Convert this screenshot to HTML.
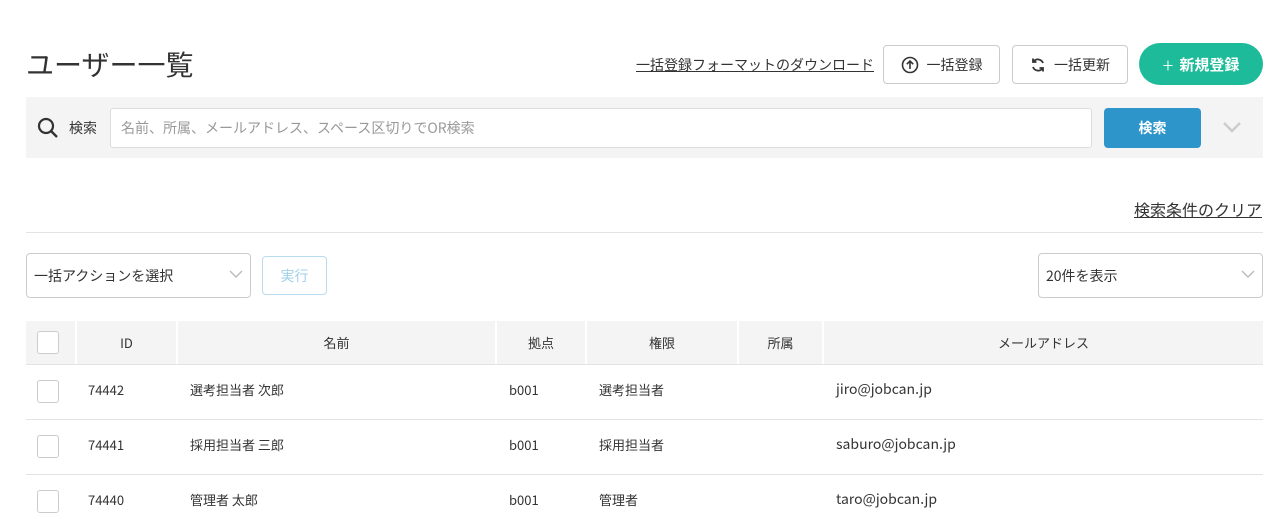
<!DOCTYPE html>
<html><head><meta charset="utf-8"><style>
*{box-sizing:border-box;margin:0;padding:0}
body{width:1288px;height:526px;overflow:hidden;background:#fff;font-family:"Noto Sans CJK JP","Liberation Sans",sans-serif;color:#333;position:relative}
.a{position:absolute}
h1{position:absolute;left:26px;top:44px;font-size:28px;line-height:40px;font-weight:400;color:#333}
.btn{position:absolute;border:1px solid #ccc;border-radius:4px;background:#fff;font-size:14px;display:flex;align-items:center;justify-content:center;gap:8px;color:#333}
.cb{position:absolute;width:22px;height:23px;border:1px solid #ccc;border-radius:3px;background:#fff}
.th{position:absolute;top:321px;height:43px;background:#f4f4f4;font-size:13px;display:flex;align-items:center;justify-content:center;border-right:2px solid #fff}
.td{position:absolute;font-size:13px;line-height:20px;color:#333}
.line{position:absolute;left:26px;width:1237px;height:1px;background:#e3e3e3}
</style></head><body>
<h1>ユーザー一覧</h1>
<div class="a" style="left:636px;top:55px;font-size:14px;line-height:20px;text-decoration:underline">一括登録フォーマットのダウンロード</div>
<div class="btn" style="left:883px;top:45px;width:117px;height:39px"><svg width="18" height="18" viewBox="0 0 18 18"><circle cx="9" cy="9" r="7.5" fill="none" stroke="#333" stroke-width="1.6"/><path d="M9 13V5M5.8 8.2L9 5l3.2 3.2" fill="none" stroke="#333" stroke-width="1.6"/></svg>一括登録</div>
<div class="btn" style="left:1012px;top:45px;width:116px;height:39px"><svg width="16" height="16" viewBox="0 0 16 16"><path d="M13 6A5.5 5.5 0 0 0 3.5 4.5M3 10a5.5 5.5 0 0 0 9.5 1.5" fill="none" stroke="#333" stroke-width="1.8"/><path d="M3 1.5v3.5h3.5M13 14.5V11H9.5" fill="none" stroke="#333" stroke-width="1.8"/></svg>一括更新</div>
<div class="btn" style="left:1139px;top:43px;width:124px;height:42px;background:#1dbb99;border:none;border-radius:21px;color:#fff;font-size:15px;font-weight:bold;gap:6px"><span style="font-size:20px;font-weight:300">+</span>新規登録</div>
<div class="a" style="left:26px;top:97px;width:1237px;height:61px;background:#f4f4f4"></div>
<svg class="a" style="left:37px;top:117px" width="22" height="22" viewBox="0 0 22 22"><circle cx="9" cy="9" r="7" fill="none" stroke="#333" stroke-width="2.2"/><path d="M14 14l6 6" stroke="#333" stroke-width="2.4"/></svg>
<div class="a" style="left:69px;top:118px;font-size:14px;line-height:20px">検索</div>
<div class="a" style="left:110px;top:108px;width:982px;height:40px;background:#fff;border:1px solid #ddd;border-radius:3px;font-size:14px;line-height:20px;color:#999;padding:9px 10px">名前、所属、メールアドレス、スペース区切りでOR検索</div>
<div class="btn" style="left:1104px;top:108px;width:97px;height:40px;background:#2e95cb;border:none;color:#fff;font-weight:bold">検索</div>
<svg class="a" style="left:1222px;top:120px" width="20" height="14" viewBox="0 0 20 14"><path d="M2 3l8 8 8-8" fill="none" stroke="#ccc" stroke-width="2.5"/></svg>
<div class="a" style="left:1134px;top:198px;font-size:16px;line-height:22px;text-decoration:underline">検索条件のクリア</div>
<div class="line" style="top:232px"></div>
<div class="btn" style="left:26px;top:253px;width:225px;height:45px;justify-content:flex-start;padding-left:7px">一括アクションを選択</div>
<svg class="a" style="left:229px;top:270px" width="14" height="9" viewBox="0 0 14 9"><path d="M1 1l6 6 6-6" fill="none" stroke="#bbb" stroke-width="1.4"/></svg>
<div class="btn" style="left:262px;top:256px;width:65px;height:39px;border-color:#b8dcef;color:#9fd0ec">実行</div>
<div class="btn" style="left:1038px;top:253px;width:225px;height:45px;justify-content:flex-start;padding-left:7px">20件を表示</div>
<svg class="a" style="left:1241px;top:270px" width="14" height="9" viewBox="0 0 14 9"><path d="M1 1l6 6 6-6" fill="none" stroke="#bbb" stroke-width="1.4"/></svg>
<div class="th" style="left:26px;width:51px"></div>
<div class="th" style="left:77px;width:101px">ID</div>
<div class="th" style="left:178px;width:319px">名前</div>
<div class="th" style="left:497px;width:90px">拠点</div>
<div class="th" style="left:587px;width:152px">権限</div>
<div class="th" style="left:739px;width:85px">所属</div>
<div class="th" style="left:824px;width:439px;border-right:none">メールアドレス</div>
<div class="line" style="top:364px"></div>
<div class="cb" style="left:37px;top:331px"></div>
<div class="cb" style="left:37px;top:380px"></div>
<div class="td" style="left:88px;top:380px">74442</div><div class="td" style="left:190px;top:380px">選考担当者 次郎</div><div class="td" style="left:509px;top:380px">b001</div><div class="td" style="left:599px;top:380px">選考担当者</div><div class="td" style="left:836px;top:379px;font-size:14px">jiro@jobcan.jp</div>
<div class="line" style="top:419px"></div>
<div class="cb" style="left:37px;top:435px"></div>
<div class="td" style="left:88px;top:435px">74441</div><div class="td" style="left:190px;top:435px">採用担当者 三郎</div><div class="td" style="left:509px;top:435px">b001</div><div class="td" style="left:599px;top:435px">採用担当者</div><div class="td" style="left:836px;top:434px;font-size:14px">saburo@jobcan.jp</div>
<div class="line" style="top:474px"></div>
<div class="cb" style="left:37px;top:490px"></div>
<div class="td" style="left:88px;top:490px">74440</div><div class="td" style="left:190px;top:490px">管理者 太郎</div><div class="td" style="left:509px;top:490px">b001</div><div class="td" style="left:599px;top:490px">管理者</div><div class="td" style="left:836px;top:489px;font-size:14px">taro@jobcan.jp</div>
</body></html>
